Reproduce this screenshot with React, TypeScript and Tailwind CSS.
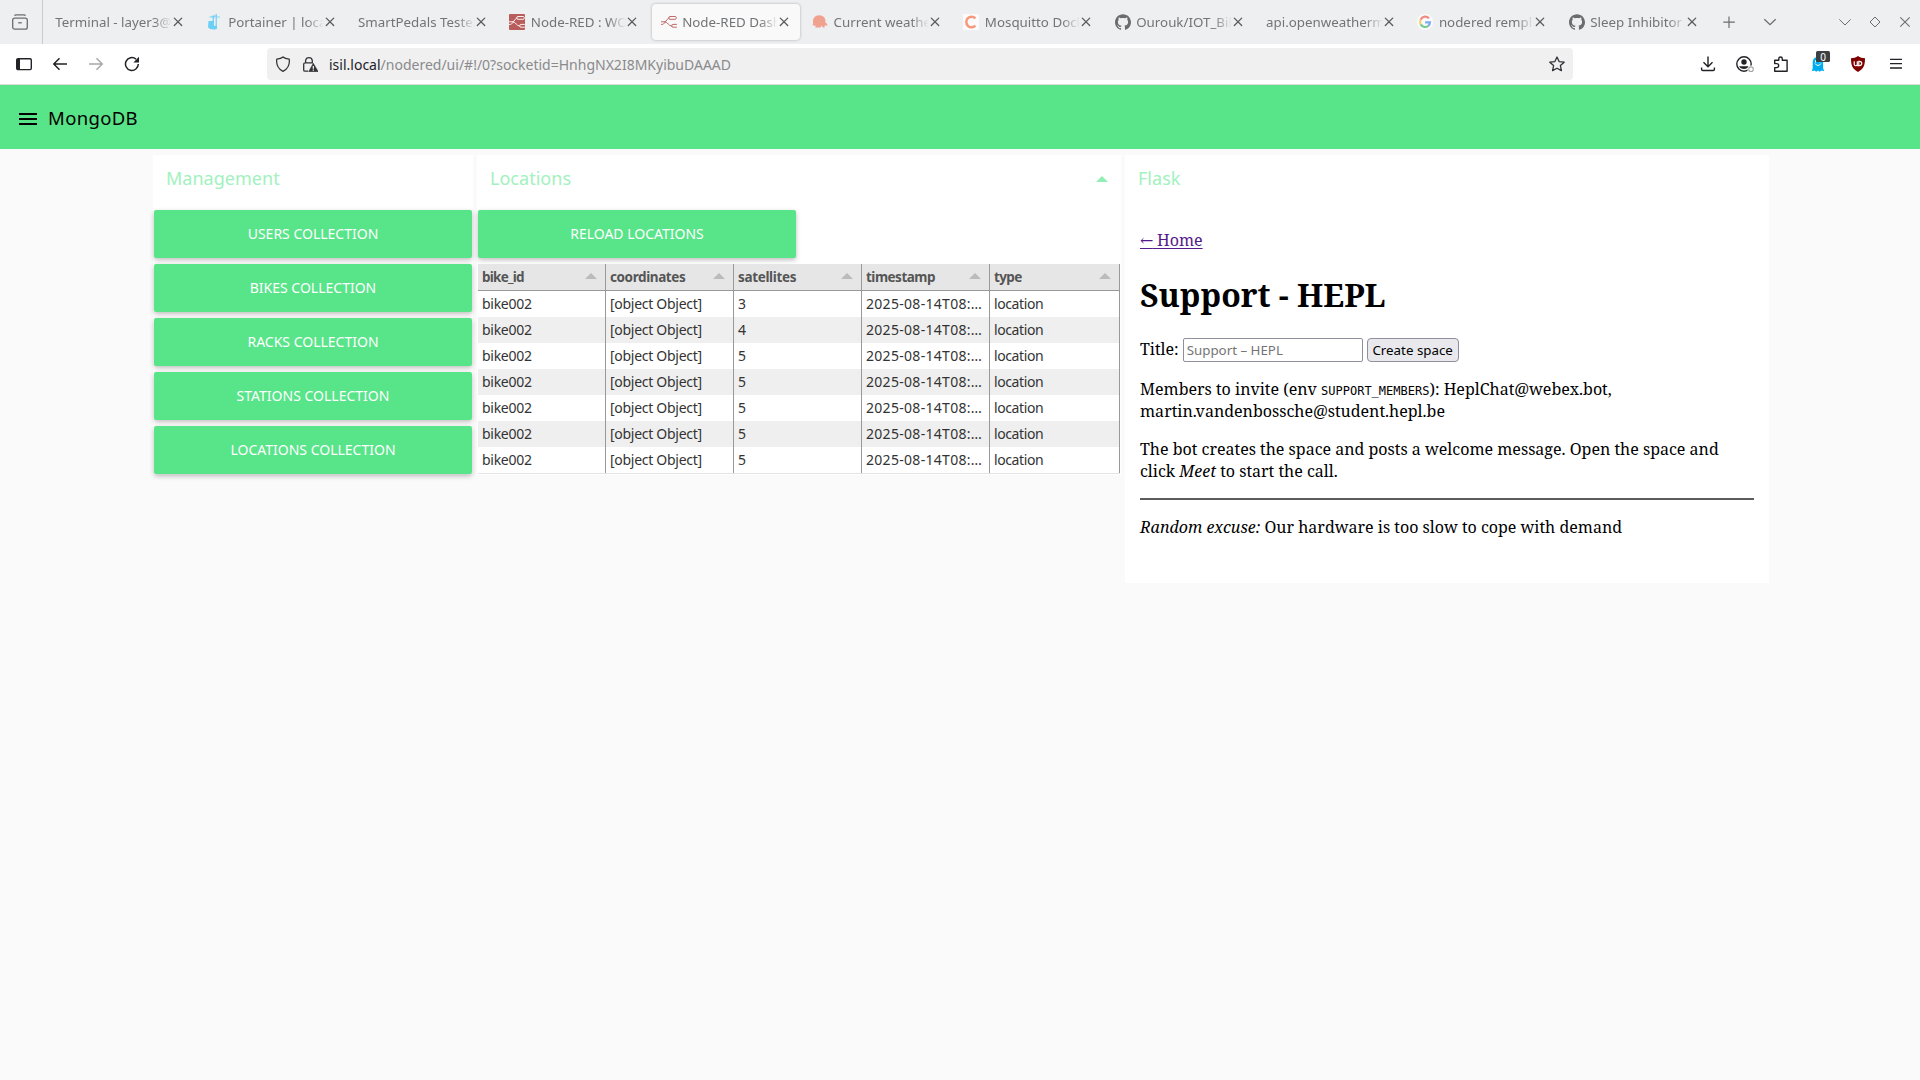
import type { ReactNode } from "react";
import { SiGithub } from "react-icons/si";

type IconProps = { children: ReactNode; className?: string; box?: string };

function Icon({ children, className = "", box = "0 0 16 16" }: IconProps) {
  return (
    <svg viewBox={box} fill="none" className={"block size-4 shrink-0 " + className}>
      {children}
    </svg>
  );
}

function Close() {
  return (
    <Icon className="text-[#5b5b5e]">
      <path d="M4.3 4.1l7.4 7.4M11.7 4.1l-7.4 7.4" stroke="currentColor" strokeWidth="1.3" strokeLinecap="round" />
    </Icon>
  );
}

function Flow({ color }: { color: string }) {
  return (
    <g stroke={color} strokeWidth="1">
      <path d="M0 7.8h3.2c3 0 2.6-4 5.4-4M3.4 7.8c4 0 3.5 4.4 8 4.4M0 10.4h1.5c1.8 0 2-2.6 3.5-2.6" />
      <rect x="7.8" y="2.5" width="7.4" height="2.8" rx="1" />
      <rect x="10.8" y="10.4" width="6" height="2.8" rx="1" />
    </g>
  );
}

const portainer = (
  <Icon>
    <g fill="#6cd0f5">
      <path d="M3 2.400l5.200-1.600v1.600h4.800v1.200H1.500z" opacity=".75" />
      <rect x="5.600" y="2" width="1.300" height="10" />
      <rect x="8.600" y="0" width="1.400" height="13" opacity=".8" />
      <path d="M1.500 7h5.500v5l1.500-.5 1.500 1v2C8.500 16 3 16 1 13.600z" />
    </g>
  </Icon>
);
const nodeRed = (
  <Icon>
    <rect width="16" height="16" rx="1" fill="#b85c5c" />
    <Flow color="#fbeeee" />
  </Icon>
);
const nodeRedDash = (
  <Icon>
    <Flow color="#c06a6a" />
  </Icon>
);
const weather = (
  <Icon>
    <path d="M1.200 9.500C.2 4.300 3 1.200 7.200 1.200c4.200 0 6.900 3 6.100 7.200l1.700 1.300.5 1.700-2.700.2-.4 1.800-1.900-.2-1-1.600-.9 1.900H3.200l.5-1.800-3.200-.5z" fill="#f0a28f" />
  </Icon>
);
const cedalo = (
  <Icon>
    <rect width="16" height="16" fill="#fbfbfb" />
    <path d="M12.400 4.300A5.300 5.300 0 1 0 12.400 11.700" stroke="#f9977b" strokeWidth="2.500" />
  </Icon>
);
const github = <SiGithub className="block size-4 shrink-0 text-[#6b6c6e]" />;
const google = (
  <Icon>
    <circle cx="8" cy="8" r="8" fill="#fbfbfb" />
    <g strokeWidth="2.200">
      <path d="M12 4.400A5 5 0 0 0 3.600 5.700" stroke="#f28a83" />
      <path d="M3.600 5.700a5 5 0 0 0 0 4.600" stroke="#fbd268" />
      <path d="M3.600 10.300A5 5 0 0 0 11.400 11.700" stroke="#79cc8e" />
      <path d="M11.400 11.700A5 5 0 0 0 13 8.300H8.200" stroke="#7eaaf5" />
    </g>
  </Icon>
);

const tabs: { title: string; icon?: ReactNode; active?: boolean }[] = [
  { title: "Terminal - layer3@" },
  { title: "Portainer | local", icon: portainer },
  { title: "SmartPedals Tester" },
  { title: "Node-RED : WORK", icon: nodeRed },
  { title: "Node-RED Dashb", icon: nodeRedDash, active: true },
  { title: "Current weather", icon: weather },
  { title: "Mosquitto Docker", icon: cedalo },
  { title: "Ourouk/IOT_Bike", icon: github },
  { title: "api.openweatherma" },
  { title: "nodered remplir", icon: google },
  { title: "Sleep Inhibitor", icon: github },
];

function TabBar() {
  return (
    <div className="flex h-11 items-center bg-[#eeeff1] text-[#737476]">
      <div className="flex h-11 w-[43px] shrink-0 items-center border-r border-[#c9cacc] pl-3">
        <Icon className="text-[#6c6d6f]">
          <rect x=".7" y="4.200" width="14.600" height="11" rx="2" stroke="currentColor" strokeWidth="1.300" />
          <path d="M2.500 1.700Q3 .9 4 .9h8q1 0 1.500.8" stroke="currentColor" strokeWidth="1.300" />
          <path d="M6.200 8.800h3.600" stroke="currentColor" strokeWidth="1.300" />
        </Icon>
      </div>
      <div className="flex pl-[1.6px]">
        {tabs.map((t) => (
          <div key={t.title} className="w-[151.350px] px-[1.700px]">
            <div
              className={
                "flex h-9 items-center rounded-[4px] pr-[8px] pl-[9px] " +
                (t.active ? "bg-[#f9f9fa] shadow-[0_0_3px_rgba(0,0,0,0.28)]" : "")
              }
            >
              {t.icon && <span className="mr-[5.500px]">{t.icon}</span>}
              <span className="-mt-px mr-[-2px] min-w-0 flex-1 overflow-hidden text-[13.333px] leading-5 whitespace-nowrap [mask-image:linear-gradient(to_left,transparent,black_18px)]">
                {t.title}
              </span>
              <Close />
            </div>
          </div>
        ))}
      </div>
      <div className="flex flex-1 items-center text-[#6c6d6f]">
        <Icon className="ml-[12px]">
          <path d="M8 2.500v11.500M2.300 8.200h11.500" stroke="currentColor" strokeWidth="1.200" />
        </Icon>
        <Icon className="ml-[24.500px]">
          <path d="M2.300 5.200L8 10.700l5.700-5.500" stroke="currentColor" strokeWidth="1.300" />
        </Icon>
        <div className="mr-[7px] ml-auto flex gap-[14px]">
          <Icon>
            <path d="M2.300 5.400L8 11l5.700-5.600" stroke="currentColor" />
          </Icon>
          <Icon>
            <path d="M8 3l5 5-5 5-5-5z" stroke="currentColor" />
          </Icon>
          <Icon>
            <path d="M3.300 3.300l9.400 9.400M12.700 3.300l-9.400 9.400" stroke="currentColor" strokeWidth="1.100" />
          </Icon>
        </div>
      </div>
    </div>
  );
}

function ToolBar() {
  return (
    <div className="flex h-[41px] items-center border-b border-[#dcdcdc] bg-white pl-4 text-[#222226]">
      <Icon>
        <rect x=".7" y="2.700" width="14.600" height="10.900" rx="1.300" stroke="currentColor" strokeWidth="1.400" />
        <path d="M1 3h3v10.500H1z" fill="currentColor" />
      </Icon>
      <Icon className="ml-5">
        <path d="M15 8H2M7.500 2.300L1.800 8l5.700 5.700" stroke="currentColor" strokeWidth="1.500" />
      </Icon>
      <Icon className="ml-5 text-[#a8a8aa]">
        <path d="M1 8h13M8.500 2.300L14.200 8l-5.700 5.700" stroke="currentColor" strokeWidth="1.500" />
      </Icon>
      <Icon className="ml-5">
        <path d="M14.300 8a6.400 6.400 0 1 1-2.300-4.900" stroke="currentColor" strokeWidth="1.500" />
        <path d="M15 .8v5.700H9.400z" fill="currentColor" />
      </Icon>
      <div className="ml-[127px] flex h-8 w-[1306px] items-center rounded-[4px] bg-[#f0f0f0] px-2">
        <Icon className="text-[#333337]">
          <path d="M8 1C9.500 2.500 12 3 14.200 3.100 15 8.500 12.500 13.300 8 15.300 3.500 13.300 1 8.500 1.800 3.100 4 3 6.500 2.500 8 1z" stroke="currentColor" strokeWidth="1.300" strokeLinejoin="round" />
        </Icon>
        <Icon className="ml-[11px] text-[#333337]">
          <path d="M6 15.200H3a1.300 1.300 0 0 1-1.300-1.300V8.200A1.300 1.300 0 0 1 3 6.900h7.300V4.500a3.400 3.400 0 0 0-6.700 0v2.400" stroke="currentColor" strokeWidth="1.300" />
          <path d="M11.300 7.200l4.900 8.500H6.600z" fill="currentColor" stroke="currentColor" strokeWidth=".5" />
          <path d="M11.300 10v2.700M11.300 13.500v1.200" stroke="#fff" strokeWidth="1.200" />
        </Icon>
        <span className="ml-[11px] pt-[2px] text-[14px] leading-5 text-[#8a8a8c]">
          <span className="text-[#222226]">isil.local</span>/nodered/ui/#!/0?socketid=HnhgNX2I8MKyibuDAAAD
        </span>
        <Icon className="ml-auto text-[#333337]">
          <path d="M8 1l2.100 4.600 5.100.6-3.800 3.400 1 5L8 12.200l-4.400 2.400 1-5L.8 6.200l5.100-.6z" stroke="currentColor" strokeWidth="1.300" strokeLinejoin="round" />
        </Icon>
      </div>
      <div className="mr-4 ml-auto flex items-center">
        <Icon>
          <path d="M8 .5v10M3.500 6.300L8 10.800l4.500-4.500M1.600 11.500v1.700q0 1.300 1.300 1.300h10.200q1.300 0 1.300-1.300v-1.700" stroke="currentColor" strokeWidth="1.400" />
        </Icon>
        <Icon className="ml-[20px] overflow-visible">
          <circle cx="8" cy="8" r="7.200" stroke="currentColor" strokeWidth="1.400" />
          <circle cx="8" cy="6" r="2.700" fill="currentColor" />
          <path d="M3.200 10.300h9.600c-1 3.600-8.600 3.600-9.600 0z" fill="currentColor" />
          <circle cx="15" cy="13.200" r="3.600" fill="#fff" />
          <circle cx="15" cy="13.200" r="2.300" stroke="#a5a5a5" strokeWidth="1.100" />
        </Icon>
        <Icon className="ml-[21px]">
          <path d="M1.700 15.300V11.600h2a2 2 0 0 0 0-4h-2V4.300h4.100V2.700a1.700 1.700 0 0 1 3.500 0v1.600h4.800v11z" stroke="currentColor" strokeWidth="1.400" strokeLinejoin="round" />
        </Icon>
        <div className="relative ml-[21px]">
          <Icon>
            <path d="M2.700 6a5.200 5.200 0 0 1 10.400 0v6l1 3.200-2.700-.7-1.600 1.200L8 14.500l-1.800 1.200-1.600-1.200-2.700.8.800-3.400z" fill="#00aef0" />
            <path d="M5 7.500q3 4 6 0" stroke="#fff" />
            <path d="M5.500 4.500v2M10 4.500v2" stroke="#fff" />
          </Icon>
          <span className="absolute -top-[5px] left-[6px] flex h-[11px] w-[14px] items-center justify-center rounded-[1.500px] bg-[#3e3f43] text-[10px] leading-none text-white">0</span>
        </div>
        <Icon className="ml-6">
          <path d="M8 0c2 1.500 4.500 2.200 7 2.300C15 9.500 13.500 13 8 16 2.500 13 1 9.500 1 2.300 3.500 2.200 6 1.500 8 0z" fill="#800000" />
          <path d="M4.200 5.200v3a1.500 1.500 0 0 0 3.100 0v-3M7.300 9.600h2.300a2.100 2.100 0 0 0 0-4.300H8.800v4" stroke="#fff" strokeWidth="1.200" />
        </Icon>
        <Icon className="ml-[22px]">
          <path d="M2 3.400h12M2 7.700h12M2 12h12" stroke="currentColor" strokeWidth="1.300" />
        </Icon>
      </div>
    </div>
  );
}

function ActionButton({ children }: { children: ReactNode }) {
  return (
    <button className="flex h-12 w-[318px] items-center justify-center rounded-[2px] bg-[#58e489] pb-[2px] text-[14px] text-white shadow-[0_2px_5px_rgba(0,0,0,0.26)]">
      {children}
    </button>
  );
}

function GroupTitle({ children }: { children: ReactNode }) {
  return <h2 className="text-[18px] leading-6 tracking-[0.020px] text-[#a2f1be]">{children}</h2>;
}

const columns = [
  { name: "bike_id", width: "w-32", track: "tracking-[-0.750px]" },
  { name: "coordinates", width: "w-32", track: "tracking-[-0.400px]" },
  { name: "satellites", width: "w-32", track: "tracking-[-0.350px]" },
  { name: "timestamp", width: "w-32", track: "tracking-[-0.500px]" },
  { name: "type", width: "w-[130px]", track: "tracking-[-0.600px]" },
];
const satellites = ["3", "4", "5", "5", "5", "5", "5"];

function LocationTable() {
  return (
    <div className="mx-px mt-[6px] w-[642px] border-b border-[#e4e4e4] text-[14px] text-[#333]">
      <div className="flex h-[27px] border-b border-[#999] bg-[#e6e6e6] text-[13.500px] font-bold text-[#555]">
        {columns.map((c) => (
          <div key={c.name} className={"flex items-center justify-between border-r border-[#999] pr-[8px] pl-1 " + c.width}>
            <span className={c.track}>{c.name}</span>
            <span className="-mt-[2px] border-x-[6px] border-b-[6px] border-x-transparent border-b-[#bbb]" />
          </div>
        ))}
      </div>
      {satellites.map((s, i) => (
        <div key={i} className={"flex h-[26px] items-center " + (i % 2 ? "bg-[#efefef]" : "bg-white")}>
          {["bike002", "[object Object]", s, "2025-08-14T08:…", "location"].map((v, j) => (
            <div
              key={j}
              className={
                "h-full border-r border-[#999] pl-1 leading-[25px] whitespace-nowrap " +
                columns[j].width +
                (j === 3 ? " tracking-[0.300px]" : j === 2 ? "" : j === 4 ? " tracking-[-0.400px]" : " tracking-[-0.280px]")
              }
            >
              {v}
            </div>
          ))}
        </div>
      ))}
    </div>
  );
}

function SupportPage() {
  return (
    <div className="ml-[15px] w-[614px] font-['Noto_Serif',serif] text-[16px] leading-[22px] text-black">
      <a className="block h-[22px] text-[#551a8b] underline underline-offset-2">
        <span className="font-['DejaVu_Serif',serif] leading-none tracking-[-0.600px]">←</span> Home
      </a>
      <h1 className="mt-[22px] text-[32px] leading-[44px] font-bold">Support - HEPL</h1>
      <div className="mt-[21px] flex h-6 items-center">
        <span className="-mt-[2px] mr-1">Title:</span>
        <input
          placeholder="Support – HEPL"
          className="h-6 w-[180px] rounded-[2px] border border-[#8f8f9d] bg-white px-[3px] font-['Noto_Sans',sans-serif] text-[13.333px] placeholder:text-[#757575]"
        />
        <button className="ml-1 h-6 w-[92px] rounded-[4px] border border-[#8f8f9d] bg-[#e9e9ed] font-['Noto_Sans',sans-serif] text-[13.333px] leading-[22px] whitespace-nowrap">
          Create space
        </button>
      </div>
      <p className="mt-4">
        Members to invite (env <code className="font-['DejaVu_Sans_Mono',monospace] text-[12px] leading-none">SUPPORT_MEMBERS</code>): HeplChat@webex.bot,
        <br />
        martin.vandenbossche@student.hepl.be
      </p>
      <p className="mt-4">
        The bot creates the space and posts a welcome message. Open the space and click <em>Meet</em> to start the call.
      </p>
      <hr className="my-4 h-[2px] border-0 bg-[#5c5c5c]" />
      <p>
        <em>Random excuse:</em> Our hardware is too slow to cope with demand
      </p>
    </div>
  );
}

export default function App() {
  return (
    <div className="h-[1080px] w-[1920px] overflow-hidden bg-[#fafafa] font-['Noto_Sans',sans-serif]">
      <TabBar />
      <ToolBar />
      <header className="flex h-16 items-center bg-[#58e489] pl-[19px]">
        <svg viewBox="0 0 18 12" className="mt-[4px] h-3 w-[18px]">
          <path d="M0 1h18M0 6h18M0 11h18" stroke="#000" strokeWidth="2" />
        </svg>
        <h1 className="mt-[2px] ml-[11px] text-[18.500px] leading-6 tracking-[0.350px] text-black">MongoDB</h1>
      </header>
      <main className="flex items-start gap-1 pt-[6px] pl-[153px]">
        <section className="w-[320px] bg-white pb-px">
          <div className="h-[55px] pt-[11px] pl-[13px]">
            <GroupTitle>Management</GroupTitle>
          </div>
          <div className="flex flex-col gap-[6px] pl-px">
            <ActionButton>USERS COLLECTION</ActionButton>
            <ActionButton>BIKES COLLECTION</ActionButton>
            <ActionButton>RACKS COLLECTION</ActionButton>
            <ActionButton>STATIONS COLLECTION</ActionButton>
            <ActionButton>LOCATIONS COLLECTION</ActionButton>
          </div>
        </section>
        <section className="w-[644px] bg-white pb-px">
          <div className="flex h-[55px] items-start justify-between pt-[11px] pr-[13px] pl-[13px]">
            <GroupTitle>Locations</GroupTitle>
            <span className="mt-[10px] border-x-[6px] border-b-[6px] border-x-transparent border-b-[#92efb3]" />
          </div>
          <div className="pl-px">
            <ActionButton>RELOAD LOCATIONS</ActionButton>
          </div>
          <LocationTable />
        </section>
        <section className="h-[428px] w-[644px] bg-white">
          <div className="h-[74px] pt-[11px] pl-[13px]">
            <GroupTitle>Flask</GroupTitle>
          </div>
          <SupportPage />
        </section>
      </main>
    </div>
  );
}
